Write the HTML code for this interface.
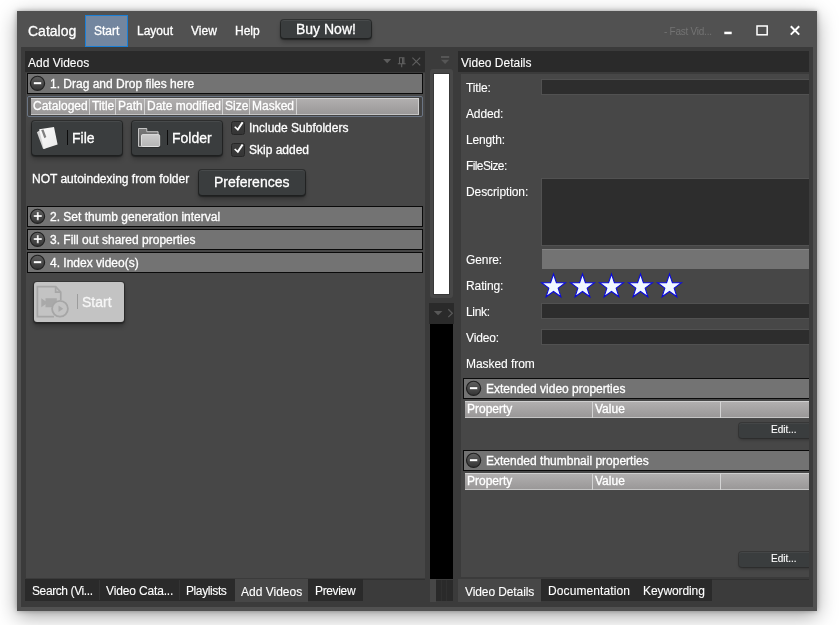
<!DOCTYPE html>
<html>
<head>
<meta charset="utf-8">
<title>Catalog</title>
<style>
html,body{margin:0;padding:0;background:#fff;}
body{width:839px;height:625px;position:relative;overflow:hidden;font-family:"Liberation Sans",Arial,sans-serif;font-size:12px;color:#fff;}
.a{position:absolute;box-sizing:border-box;}
.t{position:absolute;white-space:nowrap;line-height:14px;will-change:transform;-webkit-text-stroke:0.3px currentColor;}
#win{left:17px;top:11px;width:800px;height:600px;background:#515151;box-shadow:0 5px 19px rgba(0,0,0,.36),0 0 5px rgba(0,0,0,.3);}
#dock{left:21px;top:47px;width:792px;height:560px;background:#3b3b3b;}
.phead{background:#2a2a2a;}
.pbody{background:#474747;}
.acc{background:#737373;border:1px solid #0a0a0a;}
.circ{width:14px;height:14px;border-radius:50%;background:radial-gradient(circle at 50% 35%,#4a4a4a,#1c1c1c);border:1px solid #2a2a2a;}
.btn{background:#3a3d3e;border-radius:3px;box-shadow:0 0 0 1px rgba(28,30,30,.55),0 1px 1px 1px rgba(20,22,22,.55),0 4px 5px rgba(0,0,0,.28),inset 0 1px 0 rgba(255,255,255,.07);}
.btns{background:#3a3d3e;border-radius:3px;box-shadow:0 0 0 1px rgba(28,30,30,.35),0 2px 3px rgba(0,0,0,.25),inset 0 1px 0 rgba(255,255,255,.05);}
.inp{background:#2d2d2d;border:1px solid #515151;}
.gh{background:linear-gradient(#b1afaf,#9a9898);border:1px solid #cfcfcf;border-left:none;border-bottom-color:#c4c4c4;}
.ghs{width:1px;height:16px;background:#d4d4d4;}
.cb{width:14px;height:14px;background:linear-gradient(#3d3d3d,#353535);border:1px solid #262626;border-radius:2.5px;}
.tab{background:#2a2a2a;}
.tabsel{background:#474747;}
.seg{font-family:"Liberation Sans",sans-serif;font-size:12px;-webkit-text-stroke:0.1px currentColor;}
</style>
</head>
<body>
<div id="win" class="a"></div>
<div id="dock" class="a"></div>

<!-- menu bar -->
<div class="t" style="left:28px;top:22px;font-size:14px;line-height:18px;">Catalog</div>
<div class="a" style="left:85px;top:15px;width:43px;height:32px;background:#73869f;border:1px solid #1b7fd5;"></div>
<div class="t" style="left:94px;top:24px;">Start</div>
<div class="t" style="left:137px;top:24px;">Layout</div>
<div class="t" style="left:191px;top:24px;">View</div>
<div class="t" style="left:235px;top:24px;">Help</div>
<div class="a btn" style="left:281px;top:20px;width:90px;height:18px;"></div>
<div class="t" style="left:296px;top:21px;font-size:14px;line-height:16px;">Buy Now!</div>
<div class="t" style="left:664px;top:25.5px;font-size:10px;color:#737373;line-height:12px;-webkit-text-stroke:0;letter-spacing:-0.25px;">- Fast Vid...</div>
<svg class="a" style="left:720px;top:20px;" width="90" height="20" viewBox="0 0 90 20"><rect x="4.300" y="11.700" width="7.400" height="2.500" fill="#fff"/><rect x="37" y="6" width="10.200" height="8.800" fill="none" stroke="#fff" stroke-width="1.500"/><path d="M70.800 6.200l8.400 8.400M79.200 6.200l-8.400 8.400" stroke="#fff" stroke-width="2" fill="none"/></svg>

<!-- left panel -->
<div class="a phead" style="left:25px;top:51px;width:400px;height:21px;"></div>
<div class="t seg" style="left:28px;top:56px;">Add Videos</div>
<svg class="a" style="left:380px;top:54px;" width="44" height="16" viewBox="0 0 44 16"><path d="M3.2 5h8l-4 4.2z" fill="#5c5c5c"/><g fill="none" stroke="#606060" stroke-width="1.1"><path d="M19.5 3.8h4.4v6h-4.4zM22.6 3.8v6M17.8 9.8h7.8M21.7 9.8v3.4"/><path d="M32.4 3.6l7.8 7.8M40.2 3.6l-7.8 7.8"/></g></svg>
<div class="a pbody" style="left:26px;top:73px;width:399px;height:505px;"></div>

<div class="a acc" style="left:27px;top:73px;width:396px;height:21px;"></div>
<svg class="a" style="left:29px;top:75px;" width="18" height="18" viewBox="0 0 18 18"><g transform="translate(0.50 0.35)"><defs><linearGradient id="cg1" x1="0" y1="0" x2="0" y2="1"><stop offset="0" stop-color="#606060"/><stop offset="1" stop-color="#353535"/></linearGradient></defs><circle cx="8" cy="8" r="7.100" fill="url(#cg1)" stroke="#202020" stroke-width="1.200"/><rect x="4.2" y="6.650" width="7.600" height="2.300" fill="#fff" stroke="#3a3a3a" stroke-width="0.3"/></g></svg>
<div class="t" style="left:50px;top:77px;">1. Drag and Drop files here</div>

<div class="a" style="left:27px;top:96px;width:396px;height:21px;border:1px solid #6b7584;border-radius:2px;background:#424242;"></div>
<div class="a gh" style="left:31px;top:98px;width:388px;height:17px;"></div>
<div class="a ghs" style="left:89px;top:99px;"></div>
<div class="a ghs" style="left:115px;top:99px;"></div>
<div class="a ghs" style="left:144px;top:99px;"></div>
<div class="a ghs" style="left:222px;top:99px;"></div>
<div class="a ghs" style="left:249px;top:99px;"></div>
<div class="a ghs" style="left:296px;top:99px;"></div>
<div class="t" style="left:33px;top:99px;">Cataloged</div>
<div class="t" style="left:92px;top:99px;">Title</div>
<div class="t" style="left:118px;top:99px;">Path</div>
<div class="t" style="left:147px;top:99px;">Date modified</div>
<div class="t" style="left:225px;top:99px;">Size</div>
<div class="t" style="left:252px;top:99px;">Masked</div>

<div class="a btn" style="left:32px;top:121px;width:90px;height:34px;"></div>
<svg class="a" style="left:32px;top:122px;" width="32" height="32" viewBox="0 0 32 32"><defs><linearGradient id="pg1" x1="0" y1="0" x2="1" y2="1"><stop offset="0" stop-color="#fbfbfb"/><stop offset="1" stop-color="#e9e9e9"/></linearGradient></defs><path d="M4.900 10.200L9 7.500l4.500 18.800-2.400.8z" fill="#d4d4d4"/><path d="M7.200 7.200L22 4.900l3.600 17.600-13.800 4.400z" fill="url(#pg1)"/><path d="M9.200 8.100l2.300-.5 2.800 7.300-1.900 1.300z" fill="#808080"/></svg>
<div class="a" style="left:67px;top:130px;width:1px;height:15px;background:#0c0c0c;"></div>
<div class="t" style="left:72px;top:130px;font-size:14px;line-height:16px;">File</div>
<div class="a btn" style="left:132px;top:121px;width:90px;height:34px;"></div>
<svg class="a" style="left:132px;top:122px;" width="32" height="32" viewBox="0 0 32 32"><defs><linearGradient id="fg1" x1="0" y1="0" x2="0" y2="1"><stop offset="0" stop-color="#cbcbcb"/><stop offset="1" stop-color="#b6b6b6"/></linearGradient><linearGradient id="fg2" x1="0" y1="0" x2="0" y2="1"><stop offset="0" stop-color="#7a7a7a"/><stop offset="1" stop-color="#5e5e5e"/></linearGradient></defs><path d="M5.800 6.300h9.700v3.200h11v2.600h1.900v13.600H5.800z" fill="#1c1e1e" opacity=".55"/><path d="M6.500 6.500h8.300v3.200h11.300v14.700H6.500z" fill="url(#fg2)" stroke="#d2d2d2" stroke-width=".9" stroke-linejoin="round"/><rect x="9.500" y="12.600" width="18.200" height="11.900" rx="1.200" fill="url(#fg1)" stroke="#e4e4e4" stroke-width=".9"/></svg>
<div class="a" style="left:167px;top:130px;width:1px;height:15px;background:#0c0c0c;"></div>
<div class="t" style="left:172px;top:130px;font-size:14px;line-height:16px;">Folder</div>

<div class="a cb" style="left:231px;top:121px;"></div>
<svg class="a" style="left:232px;top:120px;" width="13" height="14" viewBox="0 0 13 14"><path transform="translate(0 .4)" d="M2.200 6.900l1-1 2.300 1.900 4.300-6.500 1.700 1.100-5.500 8.300z" fill="#fff"/></svg>
<div class="t" style="left:249px;top:121px;">Include Subfolders</div>
<div class="a cb" style="left:231px;top:143px;"></div>
<svg class="a" style="left:232px;top:142px;" width="13" height="14" viewBox="0 0 13 14"><path transform="translate(0 .6)" d="M2.200 6.900l1-1 2.300 1.900 4.300-6.500 1.700 1.100-5.500 8.300z" fill="#fff"/></svg>
<div class="t" style="left:249px;top:143px;">Skip added</div>

<div class="t" style="left:32px;top:172px;">NOT autoindexing from folder</div>
<div class="a btn" style="left:199px;top:170px;width:106px;height:25px;"></div>
<div class="t" style="left:214px;top:174px;font-size:14px;line-height:16px;">Preferences</div>

<div class="a acc" style="left:27px;top:206px;width:396px;height:21px;"></div>
<svg class="a" style="left:29px;top:208px;" width="18" height="18" viewBox="0 0 18 18"><g transform="translate(0.50 0.35)"><defs><linearGradient id="cg2" x1="0" y1="0" x2="0" y2="1"><stop offset="0" stop-color="#606060"/><stop offset="1" stop-color="#353535"/></linearGradient></defs><circle cx="8" cy="8" r="7.100" fill="url(#cg2)" stroke="#202020" stroke-width="1.200"/><path d="M4.20 6.75H7.30V3.65H9.30V6.75H12.40V8.75H9.30V11.85H7.30V8.75H4.20z" fill="#fff" stroke="#3a3a3a" stroke-width="0.3"/></g></svg>
<div class="t" style="left:50px;top:210px;">2. Set thumb generation interval</div>
<div class="a acc" style="left:27px;top:229px;width:396px;height:21px;"></div>
<svg class="a" style="left:29px;top:231px;" width="18" height="18" viewBox="0 0 18 18"><g transform="translate(0.50 0.35)"><defs><linearGradient id="cg3" x1="0" y1="0" x2="0" y2="1"><stop offset="0" stop-color="#606060"/><stop offset="1" stop-color="#353535"/></linearGradient></defs><circle cx="8" cy="8" r="7.100" fill="url(#cg3)" stroke="#202020" stroke-width="1.200"/><path d="M4.20 6.75H7.30V3.65H9.30V6.75H12.40V8.75H9.30V11.85H7.30V8.75H4.20z" fill="#fff" stroke="#3a3a3a" stroke-width="0.3"/></g></svg>
<div class="t" style="left:50px;top:233px;">3. Fill out shared properties</div>
<div class="a acc" style="left:27px;top:252px;width:396px;height:21px;"></div>
<svg class="a" style="left:29px;top:254px;" width="18" height="18" viewBox="0 0 18 18"><g transform="translate(0.50 0.35)"><defs><linearGradient id="cg4" x1="0" y1="0" x2="0" y2="1"><stop offset="0" stop-color="#606060"/><stop offset="1" stop-color="#353535"/></linearGradient></defs><circle cx="8" cy="8" r="7.100" fill="url(#cg4)" stroke="#202020" stroke-width="1.200"/><rect x="4.2" y="6.650" width="7.600" height="2.300" fill="#fff" stroke="#3a3a3a" stroke-width="0.3"/></g></svg>
<div class="t" style="left:50px;top:256px;">4. Index video(s)</div>

<div class="a" style="left:34px;top:282px;width:90px;height:40px;background:#c3c3c3;border-radius:3px;box-shadow:0 0 0 1px rgba(40,40,40,.5),0 1px 1px 1px rgba(25,25,25,.5),0 4px 5px rgba(0,0,0,.28);"></div>
<svg class="a" style="left:34px;top:282px;" width="40" height="40" viewBox="0 0 40 40"><g fill="none" stroke="#a6a6a6" stroke-width="1.700"><path d="M26.750 18V10.100L21.600 4.600H3.400v30.100H20"/><path d="M21.600 4.600v5.500h5.150"/></g><path d="M7.300 16.300l4.200 3v-3h11.300v8.900H11.500v-3l-4.200 3z" fill="#a9a9a9"/><circle cx="26" cy="26.750" r="7.900" fill="#c3c3c3" stroke="#a6a6a6" stroke-width="1.800"/><path d="M24.500 23.500l4.700 3.250-4.700 3.250z" fill="#a9a9a9"/></svg>
<div class="a" style="left:77px;top:294px;width:1px;height:15px;background:#9c9c9c;"></div>
<div class="t" style="left:82px;top:294px;font-size:14px;line-height:16px;color:#f6f6f6;">Start</div>

<!-- left tabs -->
<div class="a tab" style="left:25px;top:579px;width:338px;height:22px;"></div>
<div class="a" style="left:99px;top:580px;width:1px;height:20px;background:#333;"></div>
<div class="a" style="left:179px;top:580px;width:1px;height:20px;background:#333;"></div>
<div class="a tabsel" style="left:235px;top:579px;width:73px;height:23px;"></div>
<div class="t seg" style="left:32px;top:584px;letter-spacing:-0.4px;">Search (Vi...</div>
<div class="t seg" style="left:106px;top:584px;letter-spacing:-0.15px;">Video Cata...</div>
<div class="t seg" style="left:186px;top:584px;letter-spacing:-0.4px;">Playlists</div>
<div class="t seg" style="left:241px;top:585px;letter-spacing:0px;">Add Videos</div>
<div class="t seg" style="left:315px;top:584px;letter-spacing:-0.35px;">Preview</div>

<!-- middle -->
<svg class="a" style="left:438px;top:54px;" width="14" height="12" viewBox="0 0 14 12"><path d="M3 2h8.200v1.900H3zM3 5.800h8.200l-4.100 4.300z" fill="#565656"/></svg>
<div class="a" style="left:430px;top:69px;width:23px;height:229px;background:#474747;border-radius:3px;"></div>
<div class="a" style="left:433px;top:73px;width:17px;height:222px;background:#fff;border:1px solid #383838;box-sizing:border-box;"></div>
<div class="a phead" style="left:429px;top:303px;width:25px;height:21px;"></div>
<svg class="a" style="left:430px;top:305px;" width="24" height="16" viewBox="0 0 24 16"><path d="M3.800 5.900h8.600l-4.300 4.300z" fill="#585858"/><path d="M18.300 4.300l4 3.900-4 3.900" fill="none" stroke="#5a5a5a" stroke-width="1.200"/></svg>
<div class="a" style="left:430px;top:324px;width:23px;height:255px;background:#000;"></div>
<div class="a tabsel" style="left:430px;top:579px;width:6px;height:23px;"></div>
<div class="a tab" style="left:436px;top:580px;width:17px;height:21px;"></div>
<div class="a" style="left:441px;top:580px;width:1px;height:21px;background:#303030;"></div>
<div class="a" style="left:446px;top:580px;width:1px;height:21px;background:#303030;"></div>

<!-- right panel -->
<div class="a phead" style="left:458px;top:51px;width:351px;height:21px;"></div>
<div class="t seg" style="left:461px;top:56px;">Video Details</div>
<div class="a pbody" style="left:461px;top:74px;width:348px;height:503px;"></div>

<div class="t seg" style="left:466px;top:81px;letter-spacing:-0.15px;">Title:</div>
<div class="t seg" style="left:466px;top:107px;letter-spacing:-0.15px;">Added:</div>
<div class="t seg" style="left:466px;top:133px;letter-spacing:-0.15px;">Length:</div>
<div class="t seg" style="left:466px;top:159px;letter-spacing:-0.6px;">FileSize:</div>
<div class="t seg" style="left:466px;top:185px;letter-spacing:-0.1px;">Description:</div>
<div class="t seg" style="left:466px;top:253px;letter-spacing:-0.1px;">Genre:</div>
<div class="t seg" style="left:466px;top:279px;letter-spacing:-0.1px;">Rating:</div>
<div class="t seg" style="left:466px;top:305px;letter-spacing:-0.3px;">Link:</div>
<div class="t seg" style="left:466px;top:331px;letter-spacing:-0.15px;">Video:</div>
<div class="t seg" style="left:466px;top:357px;letter-spacing:-0.05px;">Masked from</div>
<div class="a inp" style="left:541px;top:79px;width:270px;height:16px;"></div>
<div class="a inp" style="left:541px;top:178px;width:270px;height:68px;"></div>
<div class="a" style="left:542px;top:249px;width:268px;height:20px;background:#737373;border-top:1px solid #828282;"></div>
<svg class="a" style="left:540px;top:272px;" width="146" height="28" viewBox="0 0 146 28"><g fill="#f0f8ff" stroke="#0808dc" stroke-width="1.050" stroke-linejoin="miter"><polygon points="13.50,2.00 16.38,10.64 25.48,10.71 18.16,16.11 20.91,24.79 13.50,19.50 6.09,24.79 8.84,16.11 1.52,10.71 10.62,10.64"/><polygon points="42.50,2.00 45.38,10.64 54.48,10.71 47.16,16.11 49.91,24.79 42.50,19.50 35.09,24.79 37.84,16.11 30.52,10.71 39.62,10.64"/><polygon points="71.50,2.00 74.38,10.64 83.48,10.71 76.16,16.11 78.91,24.79 71.50,19.50 64.09,24.79 66.84,16.11 59.52,10.71 68.62,10.64"/><polygon points="100.50,2.00 103.38,10.64 112.48,10.71 105.16,16.11 107.91,24.79 100.50,19.50 93.09,24.79 95.84,16.11 88.52,10.71 97.62,10.64"/><polygon points="129.50,2.00 132.38,10.64 141.48,10.71 134.16,16.11 136.91,24.79 129.50,19.50 122.09,24.79 124.84,16.11 117.52,10.71 126.62,10.64"/></g></svg>
<div class="a inp" style="left:541px;top:303px;width:270px;height:16px;"></div>
<div class="a inp" style="left:541px;top:329px;width:270px;height:16px;"></div>

<div class="a acc" style="left:463px;top:378px;width:350px;height:21px;"></div>
<svg class="a" style="left:465px;top:380px;" width="18" height="18" viewBox="0 0 18 18"><g transform="translate(0.60 0.35)"><defs><linearGradient id="cg5" x1="0" y1="0" x2="0" y2="1"><stop offset="0" stop-color="#606060"/><stop offset="1" stop-color="#353535"/></linearGradient></defs><circle cx="8" cy="8" r="7.100" fill="url(#cg5)" stroke="#202020" stroke-width="1.200"/><rect x="4.2" y="6.650" width="7.600" height="2.300" fill="#fff" stroke="#3a3a3a" stroke-width="0.3"/></g></svg>
<div class="t" style="left:486px;top:382px;">Extended video properties</div>
<div class="a gh" style="left:465px;top:401px;width:346px;height:17px;"></div>
<div class="a ghs" style="left:592px;top:402px;"></div>
<div class="a ghs" style="left:720px;top:402px;"></div>
<div class="t" style="left:467px;top:402px;">Property</div>
<div class="t" style="left:595px;top:402px;">Value</div>
<div class="a btns" style="left:739px;top:423px;width:76px;height:15px;"></div>
<div class="t" style="left:771px;top:424px;font-size:10px;line-height:12px;-webkit-text-stroke:0.1px #fff;">Edit...</div>

<div class="a acc" style="left:463px;top:450px;width:350px;height:21px;"></div>
<svg class="a" style="left:465px;top:452px;" width="18" height="18" viewBox="0 0 18 18"><g transform="translate(0.60 0.35)"><defs><linearGradient id="cg6" x1="0" y1="0" x2="0" y2="1"><stop offset="0" stop-color="#606060"/><stop offset="1" stop-color="#353535"/></linearGradient></defs><circle cx="8" cy="8" r="7.100" fill="url(#cg6)" stroke="#202020" stroke-width="1.200"/><rect x="4.2" y="6.650" width="7.600" height="2.300" fill="#fff" stroke="#3a3a3a" stroke-width="0.3"/></g></svg>
<div class="t" style="left:486px;top:454px;">Extended thumbnail properties</div>
<div class="a gh" style="left:465px;top:473px;width:346px;height:17px;"></div>
<div class="a ghs" style="left:592px;top:474px;"></div>
<div class="a ghs" style="left:720px;top:474px;"></div>
<div class="t" style="left:467px;top:474px;">Property</div>
<div class="t" style="left:595px;top:474px;">Value</div>
<div class="a btns" style="left:739px;top:552px;width:76px;height:15px;"></div>
<div class="t" style="left:771px;top:553px;font-size:10px;line-height:12px;-webkit-text-stroke:0.1px #fff;">Edit...</div>

<!-- right tabs -->
<div class="a tab" style="left:458px;top:579px;width:254px;height:22px;"></div>
<div class="a tabsel" style="left:458px;top:579px;width:83px;height:23px;"></div>
<div class="t seg" style="left:465px;top:585px;letter-spacing:-0.1px;">Video Details</div>
<div class="t seg" style="left:548px;top:584px;letter-spacing:0.1px;">Documentation</div>
<div class="t seg" style="left:643px;top:584px;letter-spacing:-0.1px;">Keywording</div>

<div class="a" style="left:363px;top:579px;width:62px;height:1px;background:#313131;"></div>
<div class="a" style="left:712px;top:579px;width:97px;height:1px;background:#313131;"></div>
<!-- clip anything past window right -->
<div class="a" style="left:809px;top:47px;width:4px;height:560px;background:#3b3b3b;"></div>
<div class="a" style="left:813px;top:47px;width:4px;height:560px;background:#515151;"></div>
</body>
</html>
